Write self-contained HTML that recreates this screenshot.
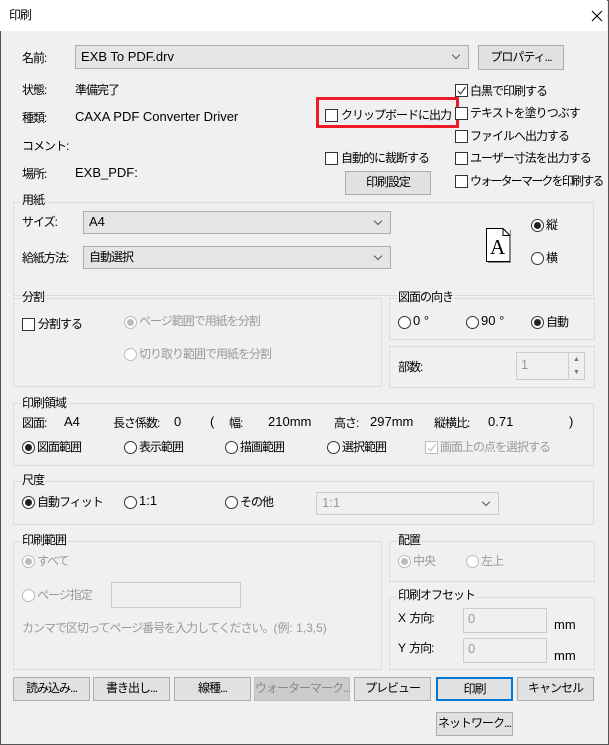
<!DOCTYPE html>
<html><head><meta charset="utf-8"><style>
*{box-sizing:border-box;margin:0;padding:0}
body{width:609px;height:745px;overflow:hidden;background:#f0f0f0;font-family:"Liberation Sans","Noto Sans CJK JP",sans-serif;font-size:12px;letter-spacing:-1px;color:#000;position:relative}
.l{letter-spacing:0;font-size:13px}
.win{position:absolute;left:0;top:0;width:609px;height:745px;border:1px solid #555;}
.title{position:absolute;left:0;top:0;width:607px;height:31px;background:#fff}
.a{position:absolute;white-space:nowrap;line-height:16px}
.g{color:#9a9a9a}
.grp{position:absolute;border:1px solid #dcdcdc}
.gl{position:absolute;background:#f0f0f0;padding:0 1px;line-height:14px;white-space:nowrap}
.cb{position:absolute;width:13px;height:13px;border:1px solid #333;background:#fff}
.rd{position:absolute;width:13px;height:13px;border:1px solid #333;border-radius:50%;background:#fff}
.rd.on::after{content:"";position:absolute;left:2px;top:2px;width:7px;height:7px;border-radius:50%;background:#222}
.rd.dis{border-color:#bcbcbc}
.rd.dis.on::after{background:#bcbcbc}
.combo{position:absolute;background:#e5e5e5;border:1px solid #adadad;padding-left:5px;line-height:20px}
.combo::after{content:"";position:absolute;right:9px;top:6px;width:5px;height:5px;border-right:1px solid #555;border-bottom:1px solid #555;transform:rotate(45deg)}
.btn{position:absolute;background:#e1e1e1;border:1px solid #adadad;text-align:center;line-height:21px;white-space:nowrap}
.tb{position:absolute;background:#f0f0f0;border:1px solid #ccc;color:#9a9a9a;padding-left:4px;line-height:20px;letter-spacing:0;font-size:13px}
</style></head><body>
<div class="win"></div>
<div class="title"></div>
<div class="a" style="left:9px;top:7px">印刷</div>
<svg style="position:absolute;left:591px;top:10px" width="12" height="12"><path d="M1 1L11 11M11 1L1 11" stroke="#000" stroke-width="1.1"/></svg>

<div class="a" style="left:22px;top:50px">名前:</div>
<div class="combo l" style="left:75px;top:45px;width:394px;height:24px;line-height:22px">EXB To PDF.drv</div>
<div class="btn" style="left:478px;top:45px;width:86px;height:25px;line-height:23px">プロパティ...</div>

<div class="a" style="left:22px;top:82px">状態:</div><div class="a" style="left:75px;top:82px">準備完了</div>
<div class="a" style="left:22px;top:110px">種類:</div><div class="a l" style="left:75px;top:109px">CAXA PDF Converter Driver</div>
<div class="a" style="left:22px;top:138px">コメント:</div>
<div class="a" style="left:22px;top:166px">場所:</div><div class="a l" style="left:75px;top:165px">EXB_PDF:</div>

<div class="cb" style="left:325px;top:109px"></div>
<div class="a" style="left:341px;top:107px;width:111px;overflow:hidden">クリップボードに出力する</div>
<div style="position:absolute;left:316px;top:97px;width:143px;height:31px;border:3px solid #ec1c24"></div>

<div class="cb" style="left:455px;top:84px"></div>
<svg style="position:absolute;left:456px;top:85px" width="11" height="11"><path d="M2 6L4.5 9L9.5 2" stroke="#333" fill="none" stroke-width="1.1"/></svg>
<div class="a" style="left:470px;top:83px">白黒で印刷する</div>
<div class="cb" style="left:455px;top:107px"></div><div class="a" style="left:470px;top:105px">テキストを塗りつぶす</div>
<div class="cb" style="left:455px;top:130px"></div><div class="a" style="left:470px;top:128px">ファイルへ出力する</div>
<div class="cb" style="left:455px;top:152px"></div><div class="a" style="left:470px;top:150px">ユーザー寸法を出力する</div>
<div class="cb" style="left:455px;top:175px"></div><div class="a" style="left:470px;top:173px;letter-spacing:-1.8px">ウォーターマークを印刷する</div>
<div class="cb" style="left:325px;top:152px"></div><div class="a" style="left:341px;top:150px">自動的に裁断する</div>
<div class="btn" style="left:345px;top:171px;width:86px;height:24px">印刷設定</div>

<div class="grp" style="left:13px;top:202px;width:581px;height:94px"></div>
<div class="gl" style="left:21px;top:193px">用紙</div>
<div class="a" style="left:22px;top:214px">サイズ:</div>
<div class="combo l" style="left:83px;top:211px;width:308px;height:23px">A4</div>
<div class="a" style="left:22px;top:250px">給紙方法:</div>
<div class="combo" style="left:83px;top:246px;width:308px;height:23px">自動選択</div>
<svg style="position:absolute;left:486px;top:228px" width="25" height="35"><path d="M0.5 0.5H17L24 7.5V33.5H0.5Z" fill="#fff" stroke="#000"/><path d="M17 0.5V7.5H24" fill="none" stroke="#000"/><text x="4" y="26" font-family="Liberation Serif,serif" font-size="21" letter-spacing="0">A</text><path d="M24.5 2V34.5H2" stroke="#888" fill="none"/></svg>
<div class="rd on" style="left:531px;top:219px"></div><div class="a" style="left:546px;top:217px">縦</div>
<div class="rd" style="left:531px;top:252px"></div><div class="a" style="left:546px;top:250px">横</div>

<div class="grp" style="left:13px;top:298px;width:369px;height:89px"></div>
<div class="gl" style="left:21px;top:290px">分割</div>
<div class="cb" style="left:22px;top:318px"></div><div class="a" style="left:38px;top:316px">分割する</div>
<div class="rd dis on" style="left:124px;top:316px"></div><div class="a g" style="left:139px;top:313px">ページ範囲で用紙を分割</div>
<div class="rd dis" style="left:124px;top:348px"></div><div class="a g" style="left:139px;top:346px">切り取り範囲で用紙を分割</div>

<div class="grp" style="left:389px;top:298px;width:206px;height:42px"></div>
<div class="gl" style="left:397px;top:290px">図面の向き</div>
<div class="rd" style="left:398px;top:316px"></div><div class="a l" style="left:413px;top:313px">0 °</div>
<div class="rd" style="left:466px;top:316px"></div><div class="a l" style="left:481px;top:313px">90 °</div>
<div class="rd on" style="left:531px;top:316px"></div><div class="a" style="left:546px;top:314px">自動</div>

<div class="grp" style="left:389px;top:346px;width:206px;height:42px"></div>
<div class="a" style="left:398px;top:359px">部数:</div>
<div class="tb" style="left:516px;top:352px;width:69px;height:28px;line-height:24px">1</div>
<div style="position:absolute;left:568px;top:353px;width:16px;height:26px;border-left:1px solid #ccc;font-size:7px;color:#777;text-align:center;line-height:13px;letter-spacing:0">▲<br>▼</div>

<div class="grp" style="left:13px;top:403px;width:581px;height:63px"></div>
<div class="gl" style="left:21px;top:396px">印刷領域</div>
<div class="a" style="left:22px;top:415px">図面:</div><div class="a l" style="left:64px;top:414px">A4</div>
<div class="a" style="left:113px;top:415px">長さ係数:</div><div class="a l" style="left:174px;top:414px">0</div>
<div class="a l" style="left:210px;top:414px">(</div><div class="a" style="left:229px;top:415px">幅:</div><div class="a l" style="left:268px;top:414px">210mm</div>
<div class="a" style="left:334px;top:415px">高さ:</div><div class="a l" style="left:370px;top:414px">297mm</div>
<div class="a" style="left:434px;top:415px">縦横比:</div><div class="a l" style="left:488px;top:414px">0.71</div><div class="a l" style="left:569px;top:414px">)</div>
<div class="rd on" style="left:22px;top:441px"></div><div class="a" style="left:37px;top:439px">図面範囲</div>
<div class="rd" style="left:124px;top:441px"></div><div class="a" style="left:139px;top:439px">表示範囲</div>
<div class="rd" style="left:225px;top:441px"></div><div class="a" style="left:240px;top:439px">描画範囲</div>
<div class="rd" style="left:327px;top:441px"></div><div class="a" style="left:342px;top:439px">選択範囲</div>
<div class="cb" style="left:425px;top:441px;border-color:#bcbcbc"></div>
<svg style="position:absolute;left:426px;top:442px" width="11" height="11"><path d="M2 6L4.5 9L9.5 2" stroke="#bcbcbc" fill="none" stroke-width="1.1"/></svg>
<div class="a g" style="left:440px;top:439px">画面上の点を選択する</div>

<div class="grp" style="left:13px;top:481px;width:581px;height:44px"></div>
<div class="gl" style="left:21px;top:473px">尺度</div>
<div class="rd on" style="left:22px;top:496px"></div><div class="a" style="left:37px;top:494px">自動フィット</div>
<div class="rd" style="left:124px;top:496px"></div><div class="a l" style="left:139px;top:493px">1:1</div>
<div class="rd" style="left:225px;top:496px"></div><div class="a" style="left:240px;top:494px">その他</div>
<div class="combo g l" style="left:316px;top:492px;width:183px;height:23px;background:#f0f0f0;border-color:#ccc">1:1</div>

<div class="grp" style="left:13px;top:541px;width:369px;height:129px"></div>
<div class="gl" style="left:21px;top:533px">印刷範囲</div>
<div class="rd dis on" style="left:22px;top:555px"></div><div class="a g" style="left:37px;top:553px">すべて</div>
<div class="rd dis" style="left:22px;top:589px"></div><div class="a g" style="left:37px;top:587px">ページ指定</div>
<div class="tb" style="left:111px;top:582px;width:130px;height:26px"></div>
<div class="a g" style="left:22px;top:620px">カンマで区切ってページ番号を入力してください。<span style="letter-spacing:0">(例: 1,3,5)</span></div>

<div class="grp" style="left:389px;top:541px;width:206px;height:41px"></div>
<div class="gl" style="left:397px;top:533px">配置</div>
<div class="rd dis on" style="left:398px;top:555px"></div><div class="a g" style="left:413px;top:553px">中央</div>
<div class="rd dis" style="left:466px;top:555px"></div><div class="a g" style="left:481px;top:553px">左上</div>

<div class="grp" style="left:389px;top:597px;width:206px;height:73px"></div>
<div class="gl" style="left:397px;top:588px">印刷オフセット</div>
<div class="a" style="left:398px;top:610px"><span style="letter-spacing:0">X </span>方向:</div>
<div class="tb" style="left:463px;top:608px;width:84px;height:25px">0</div>
<div class="a l" style="left:554px;top:617px">mm</div>
<div class="a" style="left:398px;top:640px"><span style="letter-spacing:0">Y </span>方向:</div>
<div class="tb" style="left:463px;top:638px;width:84px;height:25px">0</div>
<div class="a l" style="left:554px;top:648px">mm</div>

<div class="btn" style="left:13px;top:677px;width:77px;height:24px">読み込み...</div>
<div class="btn" style="left:93px;top:677px;width:77px;height:24px">書き出し...</div>
<div class="btn" style="left:174px;top:677px;width:77px;height:24px">線種...</div>
<div class="btn" style="left:254px;top:677px;width:96px;height:24px;background:#ccc;border-color:#bfbfbf;color:#888">ウォーターマーク...</div>
<div class="btn" style="left:354px;top:677px;width:77px;height:24px">プレビュー</div>
<div class="btn" style="left:436px;top:677px;width:77px;height:24px;border:2px solid #0078d7;line-height:20px">印刷</div>
<div class="btn" style="left:517px;top:677px;width:77px;height:24px">キャンセル</div>
<div class="btn" style="left:436px;top:712px;width:77px;height:24px">ネットワーク...</div>
</body></html>
